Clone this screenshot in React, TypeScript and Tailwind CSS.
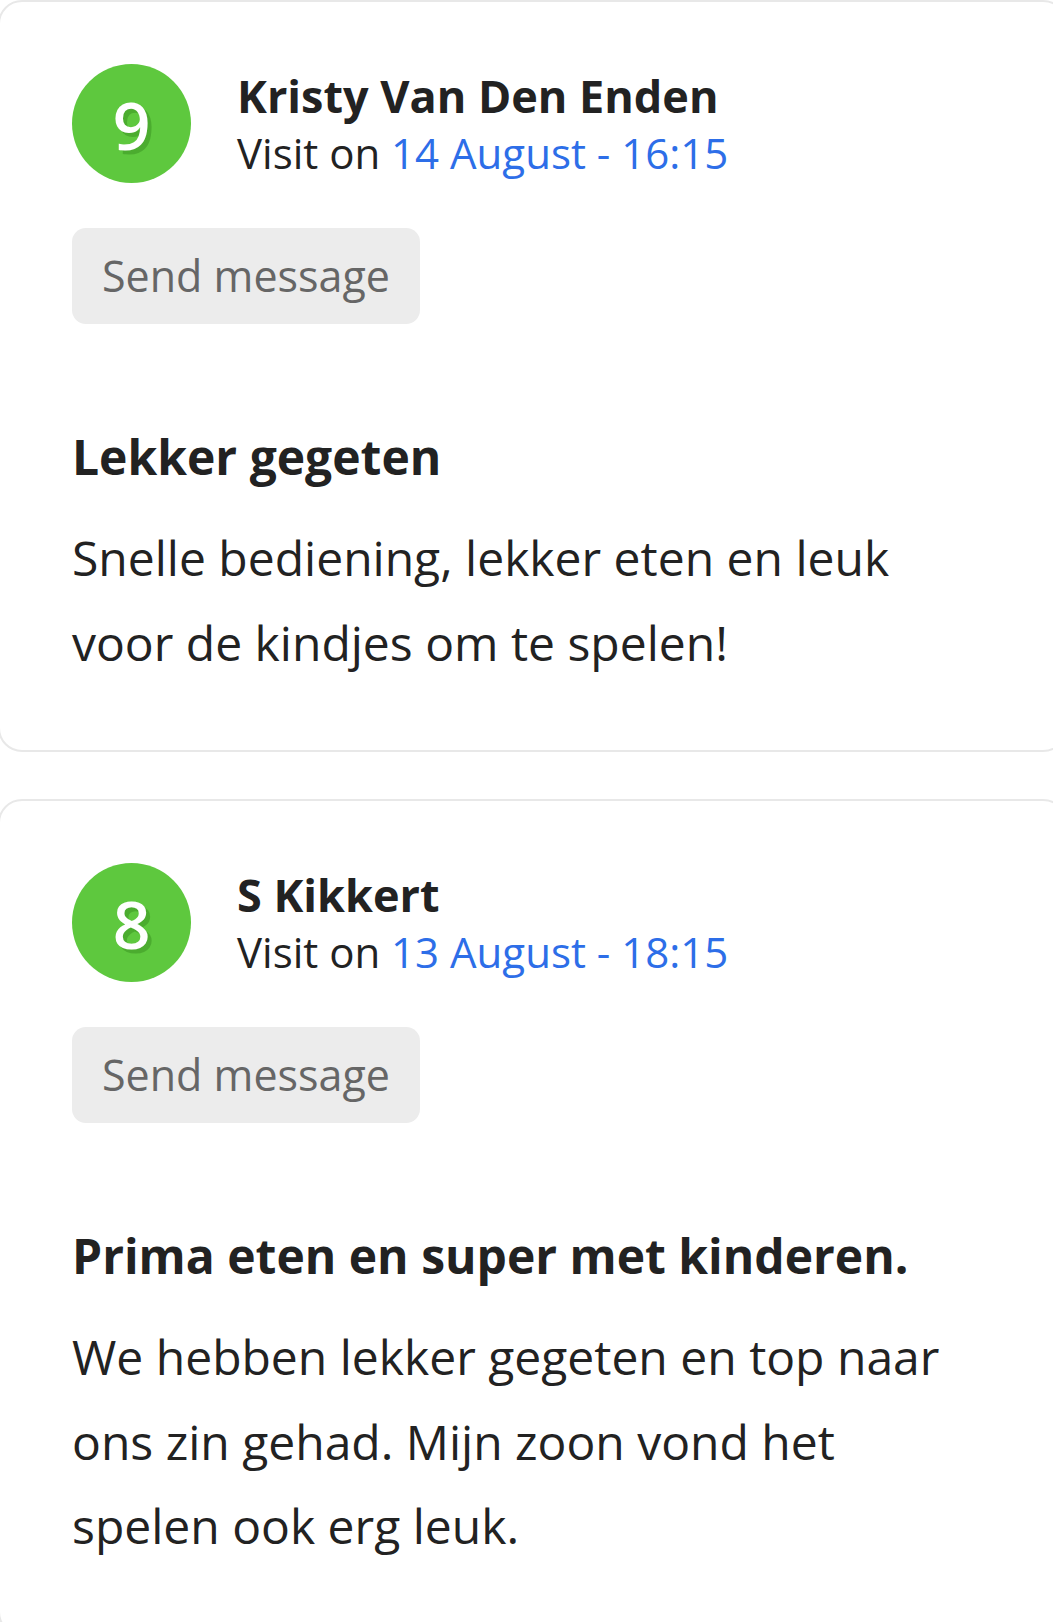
import React from "react";

interface Review {
  score: number;
  name: string;
  date: string;
  title: string;
  body: string;
}

const reviews: Review[] = [
  {
    score: 9,
    name: "Kristy Van Den Enden",
    date: "14 August - 16:15",
    title: "Lekker gegeten",
    body: "Snelle bediening, lekker eten en leuk voor de kindjes om te spelen!",
  },
  {
    score: 8,
    name: "S Kikkert",
    date: "13 August - 18:15",
    title: "Prima eten en super met kinderen.",
    body: "We hebben lekker gegeten en top naar ons zin gehad. Mijn zoon vond het spelen ook erg leuk.",
  },
];

function ReviewCard({ review }: { review: Review }) {
  return (
    <div className="-ml-[2px] -mr-[14px] rounded-[24px] border-2 border-[#e8e8e8] bg-white pl-[72px] pr-[100px] pt-[62px] pb-[65px]">
      {/* Header: score + name */}
      <div className="flex items-center gap-[46px]">
        <div className="flex h-[119px] w-[119px] shrink-0 items-center justify-center rounded-full bg-[#5ec83e]">
          <span className="text-[66px] font-semibold leading-none text-white [text-shadow:4px_4px_0_rgba(40,120,20,0.35)]">
            {review.score}
          </span>
        </div>
        <div className="flex flex-col">
          <div className="text-[45px] font-bold leading-[57px] text-[#222]">{review.name}</div>
          <div className="text-[42px] leading-[57px] text-[#222]">
            Visit on <span className="text-[#2d6ee8]">{review.date}</span>
          </div>
        </div>
      </div>

      {/* Button */}
      <button className="mt-[45px] flex h-[96px] items-center rounded-[14px] bg-[#ececec] px-[30px] text-[43px] text-[#666]">
        Send message
      </button>

      {/* Review text */}
      <h3 className="mt-[103px] text-[48px] font-bold leading-[60px] text-[#222]">{review.title}</h3>
      <p className="mt-[29px] text-[48px] leading-[84.5px] text-[#222]">{review.body}</p>
    </div>
  );
}

export default function App() {
  return (
    <div className="min-h-screen overflow-hidden bg-white font-['Open_Sans',sans-serif]">
      <div className="flex flex-col gap-[47px]">
        {reviews.map((r) => (
          <ReviewCard key={r.name} review={r} />
        ))}
      </div>
    </div>
  );
}
